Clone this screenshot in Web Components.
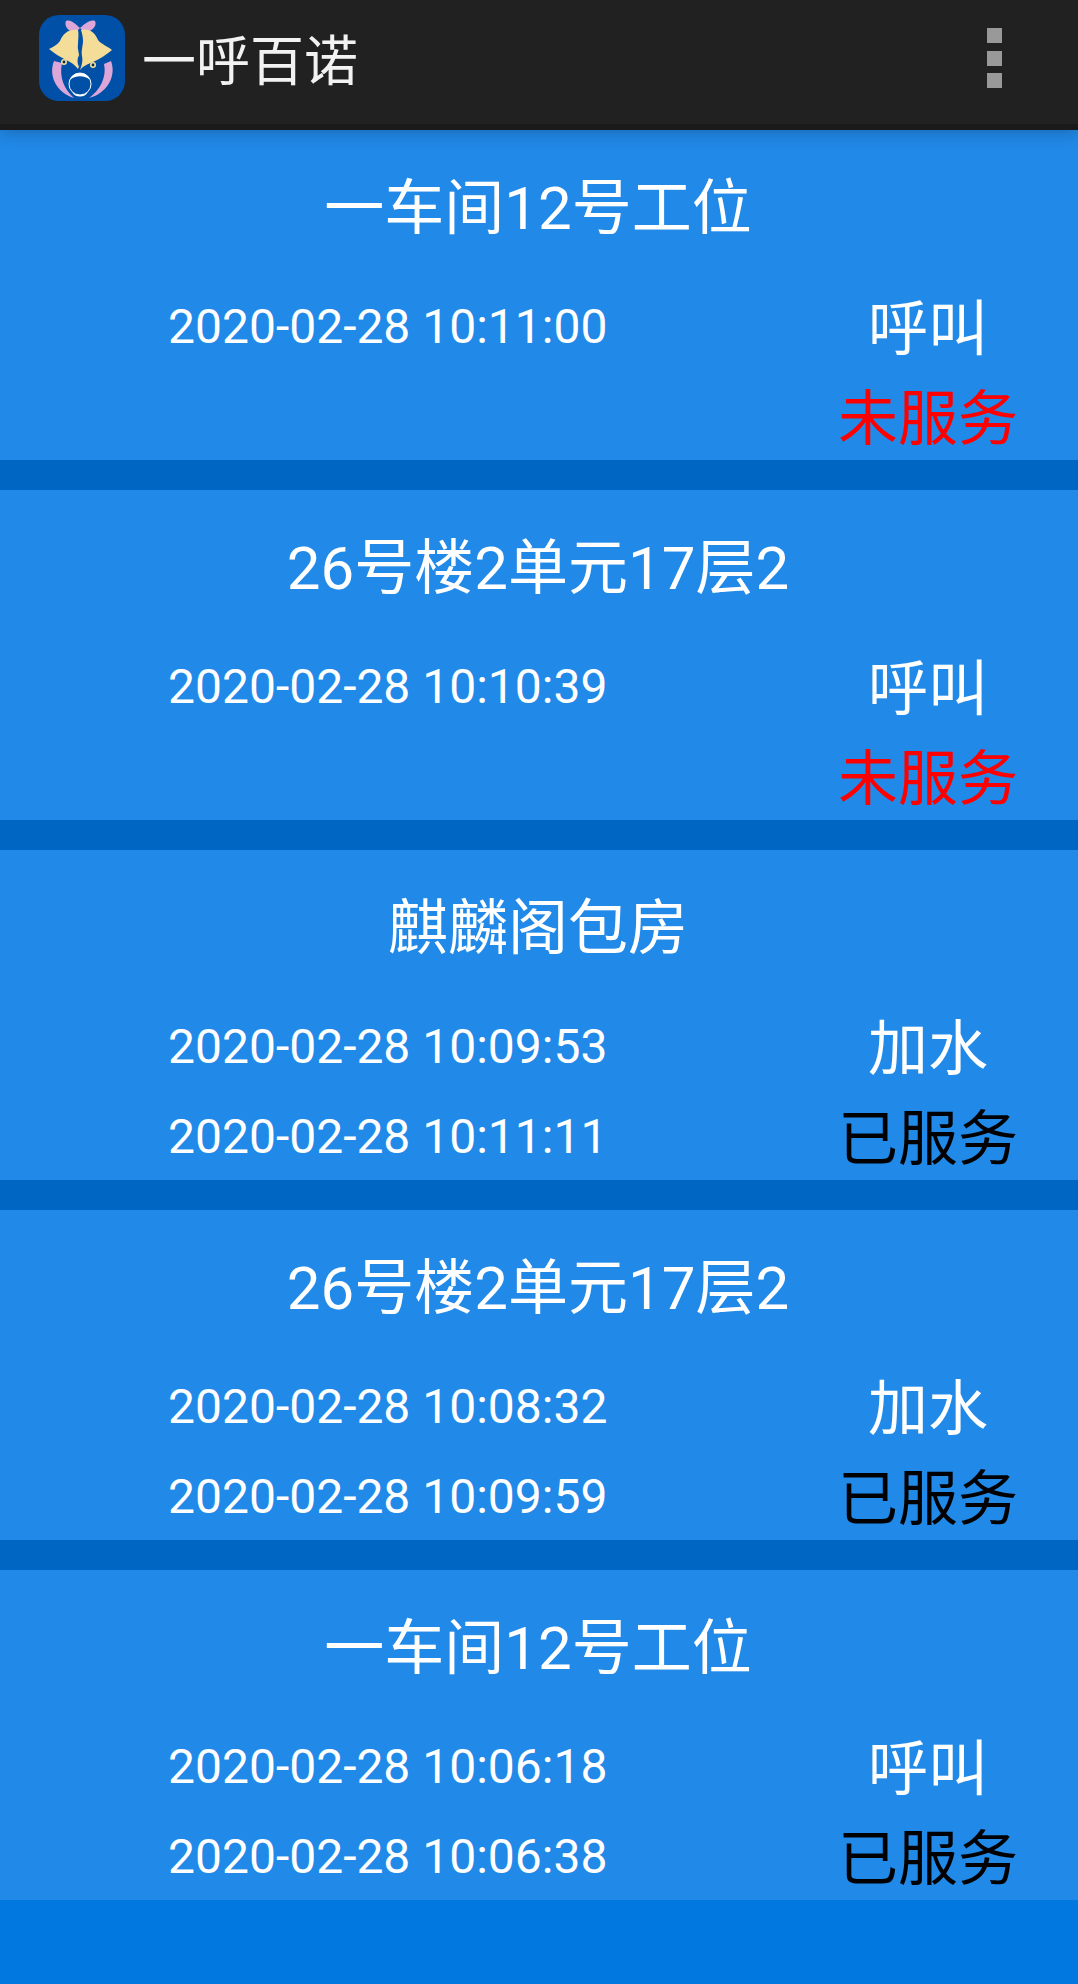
<!DOCTYPE html>
<html>
<head>
<meta charset="utf-8">
<title>一呼百诺</title>
<style>
	html, body { margin: 0; padding: 0; background: #0078e0; }
	body { font-family: Roboto, "Noto Sans CJK SC", sans-serif; height: 1984px; overflow: hidden; }
	.list { display: flex; flex-direction: column; gap: 30px; background: #0066c4; }
</style>
</head>
<body>
<app-bar title="一呼百诺"></app-bar>
<div class="list">
	<call-item place="一车间12号工位" start="2020-02-28 10:11:00" action="呼叫" state="未服务"></call-item>
	<call-item place="26号楼2单元17层2" start="2020-02-28 10:10:39" action="呼叫" state="未服务"></call-item>
	<call-item place="麒麟阁包房" start="2020-02-28 10:09:53" end="2020-02-28 10:11:11" action="加水" state="已服务"></call-item>
	<call-item place="26号楼2单元17层2" start="2020-02-28 10:08:32" end="2020-02-28 10:09:59" action="加水" state="已服务"></call-item>
	<call-item place="一车间12号工位" start="2020-02-28 10:06:18" end="2020-02-28 10:06:38" action="呼叫" state="已服务"></call-item>
</div>
<script>
(function() {
	let barTemplate = document.createElement("template");
	barTemplate.innerHTML = `
		<style>
		:host {
			display: flex;
			align-items: flex-start;
			position: relative;
			z-index: 1;
			box-sizing: border-box;
			height: 130px;
			padding: 15px 0 0 39px;
			background: linear-gradient(#212121 124px, #1a1a1a 124px);
			box-shadow: 0 2px 16px rgba(0, 0, 0, .25);
			color: #f2f2f2;
		}
		svg { width: 86px; height: 86px; flex: none; display: block; }
		#title { margin: 21px 0 0 17px; font-size: 54px; line-height: 54px; height: 54px; }
		#menu {
			margin-left: auto;
			margin-right: 76px;
			margin-top: 13px;
			display: flex;
			flex-direction: column;
			gap: 7.5px;
		}
		#menu i { display: block; width: 15px; height: 15px; background: #999; }
		</style>
		<svg viewBox="0 0 86 86">
			<rect width="86" height="86" rx="20" fill="#0050a8"/>
			<path d="M15 46C9 61 18 78 35 83C25 74 20 62 23 48Z" fill="#dda6d8"/>
			<path d="M72 46C78 62 67 79 50 83C61 75 68 62 65 49Z" fill="#dda6d8"/>
			<path d="M41 13C36 9 32 4 27 6C25 10 28 16 36 18Z" fill="#dda6d8"/>
			<path d="M41 13C46 9 51 4 56 6C58 10 55 15 46 18Z" fill="#dda6d8"/>
			<path d="M39 15C29 14 24 19 21 26C18 30 14 32 10 34C15 38 21 42 27 45C32 47 36 50 39 54C41 50 41 47 40 44C41 40 38 34 39 29C39 24 40 20 39 15Z" fill="#f4dd98"/>
			<path d="M42 15C51 13 56 18 59 25C62 29 68 31 73 35C67 40 61 44 54 47C49 49 44 51 41 55C43 50 44 45 43 41C42 35 44 31 44 26C44 22 43 18 42 15Z" fill="#f4dd98"/>
			<path d="M40 40C38 44 38 48 40 52C42 48 42 44 40 40Z" fill="#0050a8"/>
			<circle cx="25" cy="47" r="3" fill="#f4dd98"/>
			<circle cx="25" cy="47" r="1.4" fill="#0b2a55"/>
			<circle cx="54" cy="50" r="3" fill="#f4dd98"/>
			<circle cx="54" cy="50" r="1.4" fill="#0b2a55"/>
			<circle cx="41" cy="69" r="11" fill="none" stroke="#fff" stroke-width="1"/>
			<path d="M31 65C33 56 49 56 51 65C46 60 36 60 31 65Z" fill="#fff"/>
			<path d="M33 77C37 81 45 81 49 77C46 83 36 83 33 77Z" fill="#fff"/>
		</svg>
		<div id="title"></div>
		<div id="menu"><i></i><i></i><i></i></div>
	`;

	class AppBar extends HTMLElement {
		constructor() {
			super();
			this._shadowRoot = this.attachShadow({mode: "open"});
			this._shadowRoot.appendChild(barTemplate.content.cloneNode(true));
			this._shadowRoot.getElementById("title").textContent = this.getAttribute("title");
		}
	}

	let itemTemplate = document.createElement("template");
	itemTemplate.innerHTML = `
		<style>
		:host {
			display: grid;
			grid-template-columns: 1fr 176px;
			grid-template-rows: 151px 90px 89px;
			box-sizing: border-box;
			height: 330px;
			padding: 0 62px 0 168px;
			background: #2189e8;
			color: #fff;
			font-size: 48px;
		}
		#place {
			grid-column: 1 / 3;
			margin: 0 -60px 0 -168px;
			padding-top: 2px;
			text-align: center;
			font-size: 60px;
			line-height: 154px;
			height: 149px;
		}
		.cell { display: flex; align-items: center; white-space: nowrap; }
		#end { padding-top: 1px; }
		#action, #state { justify-content: center; font-size: 60px; padding-bottom: 5px; }
		#state { color: #000; }
		:host([state="未服务"]) #state { color: #f00; }
		</style>
		<div id="place"></div>
		<div class="cell" id="start"></div>
		<div class="cell" id="action"></div>
		<div class="cell" id="end"></div>
		<div class="cell" id="state"></div>
	`;

	class CallItem extends HTMLElement {
		constructor() {
			super();
			this._shadowRoot = this.attachShadow({mode: "open"});
			this._shadowRoot.appendChild(itemTemplate.content.cloneNode(true));
			for (let name of ["place", "start", "end", "action", "state"]) {
				this._shadowRoot.getElementById(name).textContent = this.getAttribute(name) || "";
			}
		}
	}

	customElements.define("app-bar", AppBar);
	customElements.define("call-item", CallItem);
})();
</script>
</body>
</html>
